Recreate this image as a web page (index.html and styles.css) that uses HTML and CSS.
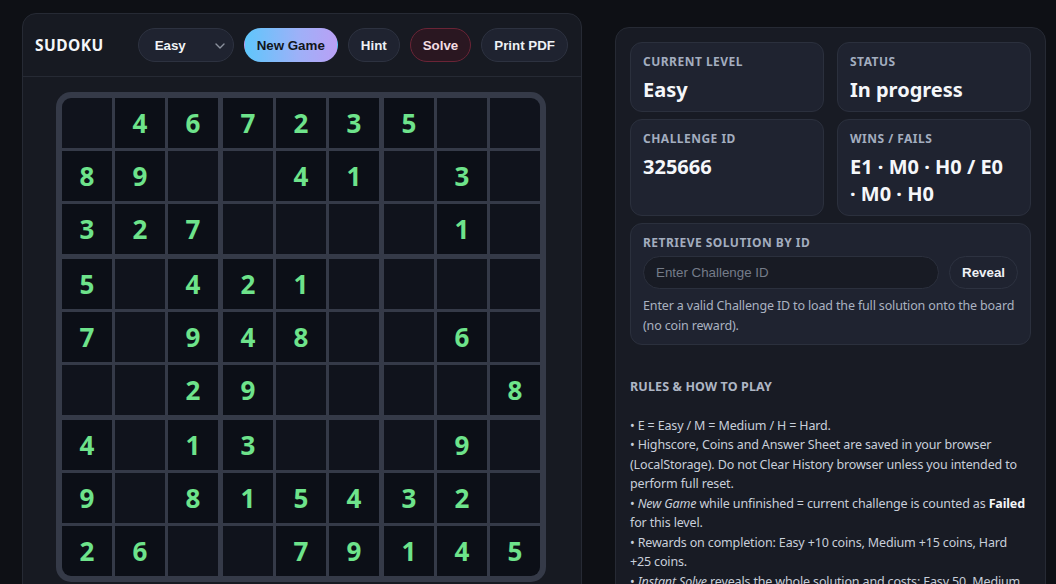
FILE: index.html
```html
<!DOCTYPE html>
<html lang="en">
<head>
<meta charset="utf-8">
<title>Sudoku</title>
<link rel="stylesheet" href="styles.css">
</head>
<body>
<div class="app">
  <section class="game">
    <header class="game-head">
      <div class="title">SUDOKU</div>
      <div class="controls">
        <span class="select-wrap">
          <select class="level">
            <option>Easy</option>
            <option>Medium</option>
            <option>Hard</option>
          </select>
          <svg class="chev" width="10" height="6" viewBox="0 0 10 6"><path d="M1 1l4 4 4-4" fill="none" stroke="#8b919d" stroke-width="1.4" stroke-linecap="round" stroke-linejoin="round"/></svg>
        </span>
        <button class="btn btn-primary">New Game</button>
        <button class="btn">Hint</button>
        <button class="btn btn-danger">Solve</button>
        <button class="btn">Print PDF</button>
      </div>
    </header>
    <div class="board-wrap">
      <div class="board" id="board"></div>
    </div>
  </section>

  <aside class="side">
    <div class="stats">
      <div class="card">
        <div class="label">Current Level</div>
        <div class="value">Easy</div>
      </div>
      <div class="card">
        <div class="label">Status</div>
        <div class="value">In progress</div>
      </div>
      <div class="card">
        <div class="label">Challenge ID</div>
        <div class="value">325666</div>
      </div>
      <div class="card">
        <div class="label">Wins / Fails</div>
        <div class="value">E1 ·&nbsp;M0 ·&nbsp;H0 / E0 ·&nbsp;M0 ·&nbsp;H0</div>
      </div>
    </div>
    <div class="card retrieve">
      <div class="label">Retrieve Solution by ID</div>
      <div class="retrieve-row">
        <input class="id-input" type="text" placeholder="Enter Challenge ID">
        <button class="btn btn-reveal">Reveal</button>
      </div>
      <p class="help">Enter a valid Challenge ID to load the full solution onto the board (no coin reward).</p>
    </div>
    <div class="rules">
      <h2 class="rules-title">RULES &amp; HOW TO PLAY</h2>
      <div class="rules-text">
        <div>• E = Easy / M = Medium / H = Hard.</div>
        <div>• Highscore, Coins and Answer Sheet are saved in your browser (LocalStorage). Do not Clear History browser unless you intended to perform full reset.</div>
        <div>• <em>New Game</em> while unfinished = current challenge is counted as <strong>Failed</strong> for this level.</div>
        <div>• Rewards on completion: Easy +10 coins, Medium +15 coins, Hard +25 coins.</div>
        <div>• <em>Instant Solve</em> reveals the whole solution and costs: Easy 50, Medium 75, Hard 100 coins.</div>
      </div>
    </div>
  </aside>
</div>
<script>
  var rows = [
    "046723500",
    "890041030",
    "327000010",
    "504210000",
    "709480060",
    "002900008",
    "401300090",
    "908154320",
    "260079145"
  ];
  var board = document.getElementById('board');
  for (var b = 0; b < 9; b++) {
    var block = document.createElement('div');
    block.className = 'block';
    var br = Math.floor(b / 3) * 3, bc = (b % 3) * 3;
    for (var i = 0; i < 9; i++) {
      var r = br + Math.floor(i / 3), c = bc + (i % 3);
      var v = rows[r].charAt(c);
      var cell = document.createElement('div');
      cell.className = v === '0' ? 'cell empty' : 'cell given';
      if (v !== '0') cell.textContent = v;
      block.appendChild(cell);
    }
    board.appendChild(block);
  }
</script>
</body>
</html>
```

FILE: styles.css
```css
* { box-sizing: border-box; }

html, body {
  margin: 0;
  background: #0e1015;
  color: #e8ebf0;
  font-family: "Noto Sans", "Open Sans", sans-serif;
}

.app {
  display: flex;
  align-items: flex-start;
  gap: 33px;
  padding: 13px 10px 0 22px;
}

/* ---------- left: game ---------- */
.game {
  width: 560px;
  height: 620px;
  background: #171a22;
  border: 1px solid #262a34;
  border-radius: 14px;
}

.game-head {
  display: flex;
  align-items: center;
  justify-content: space-between;
  padding: 14px 13px 14px 12px;
  border-bottom: 1px solid #262a34;
}

.title {
  font-weight: 700;
  font-size: 15.5px;
  letter-spacing: 0.03em;
  color: #f4f6f9;
}

.controls {
  display: flex;
  align-items: center;
  gap: 10px;
}

.select-wrap {
  position: relative;
  display: inline-block;
}

.level {
  appearance: none;
  -webkit-appearance: none;
  width: 96px;
  height: 34px;
  padding: 0 0 0 16px;
  background: #1f2330;
  border: 1px solid #2d3240;
  border-radius: 999px;
  color: #f2f4f7;
  font-family: "Liberation Sans", Arial, sans-serif;
  font-size: 13.33px;
  font-weight: 700;
}

.chev {
  position: absolute;
  right: 9px;
  top: 15px;
  pointer-events: none;
}

.btn {
  height: 34px;
  padding: 0 12px;
  background: #1f2330;
  border: 1px solid #2d3240;
  border-radius: 999px;
  color: #eef1f5;
  font-family: "Liberation Sans", Arial, sans-serif;
  font-size: 13.33px;
  font-weight: 700;
  white-space: nowrap;
}

.btn-primary {
  background: linear-gradient(90deg, #5fc6fb 0%, #9fb0f8 60%, #b9a0f5 100%);
  border-color: transparent;
  color: #12151c;
}

.btn-danger {
  background: #2a1721;
  border-color: #6a2436;
  color: #f3dde2;
}

.board-wrap {
  display: flex;
  justify-content: center;
  padding-top: 15px;
  padding-right: 2px;
}

.board {
  display: grid;
  grid-template-columns: repeat(3, 156px);
  grid-template-rows: repeat(3, 156px);
  gap: 5px;
  padding: 6px;
  background: #353a48;
  border-radius: 15px;
}

.block {
  display: grid;
  grid-template-columns: repeat(3, 50px);
  grid-template-rows: repeat(3, 50px);
  gap: 3px;
}

.cell {
  display: flex;
  align-items: center;
  justify-content: center;
  font-size: 26px;
  font-weight: 700;
  color: #6ee38b;
  line-height: 1;
}

.cell.given { background: #0c0f17; }
.cell.empty { background: #10131c; }

.block:nth-child(1) .cell:nth-child(1) { border-top-left-radius: 9px; }
.block:nth-child(3) .cell:nth-child(3) { border-top-right-radius: 9px; }
.block:nth-child(7) .cell:nth-child(7) { border-bottom-left-radius: 9px; }
.block:nth-child(9) .cell:nth-child(9) { border-bottom-right-radius: 9px; }

/* ---------- right: side panel ---------- */
.side {
  width: 431px;
  height: 620px;
  margin-top: 14px;
  padding: 14px;
  background: #181b24;
  border: 1px solid #262a34;
  border-radius: 14px;
}

.stats {
  display: grid;
  grid-template-columns: 1fr 1fr;
  column-gap: 13px;
  row-gap: 7px;
}

.card {
  background: #1f2330;
  border: 1px solid #2b303d;
  border-radius: 12px;
  padding: 11px 12px 8px 12px;
}

.label {
  font-size: 12px;
  line-height: 16px;
  font-weight: 700;
  text-transform: uppercase;
  letter-spacing: 0.04em;
  color: #a3adbf;
}

.value {
  margin-top: 6px;
  font-size: 20px;
  line-height: 27px;
  font-weight: 700;
  color: #f5f7fa;
}

.retrieve {
  margin-top: 7px;
  padding-bottom: 8px;
}

.retrieve-row {
  display: flex;
  gap: 10px;
  margin-top: 5px;
}

.id-input {
  flex: 1;
  height: 33px;
  padding: 0 12px;
  background: #181b24;
  border: 1px solid #2b303d;
  border-radius: 999px;
  color: #e8ebf0;
  font-family: "Liberation Sans", Arial, sans-serif;
  font-size: 13.33px;
  outline: none;
}

.id-input::placeholder { color: #757c89; }

.btn-reveal {
  height: 33px;
  background: #1f2330;
}

.help {
  margin: 7px 0 0;
  font-size: 12.5px;
  line-height: 20px;
  letter-spacing: -0.15px;
  color: #aab2c0;
}

.rules {
  margin-top: 32px;
}

.rules-title {
  margin: 0 0 19px;
  font-size: 12.5px;
  line-height: 19.5px;
  font-weight: 700;
  letter-spacing: 0.01em;
  color: #aeb6c4;
}

.rules-text {
  font-size: 12.5px;
  line-height: 19.5px;
  letter-spacing: -0.15px;
  color: #c8cfda;
}

.rules-text strong { color: #f3f5f8; font-weight: 700; }
.rules-text em { font-style: italic; }
```
